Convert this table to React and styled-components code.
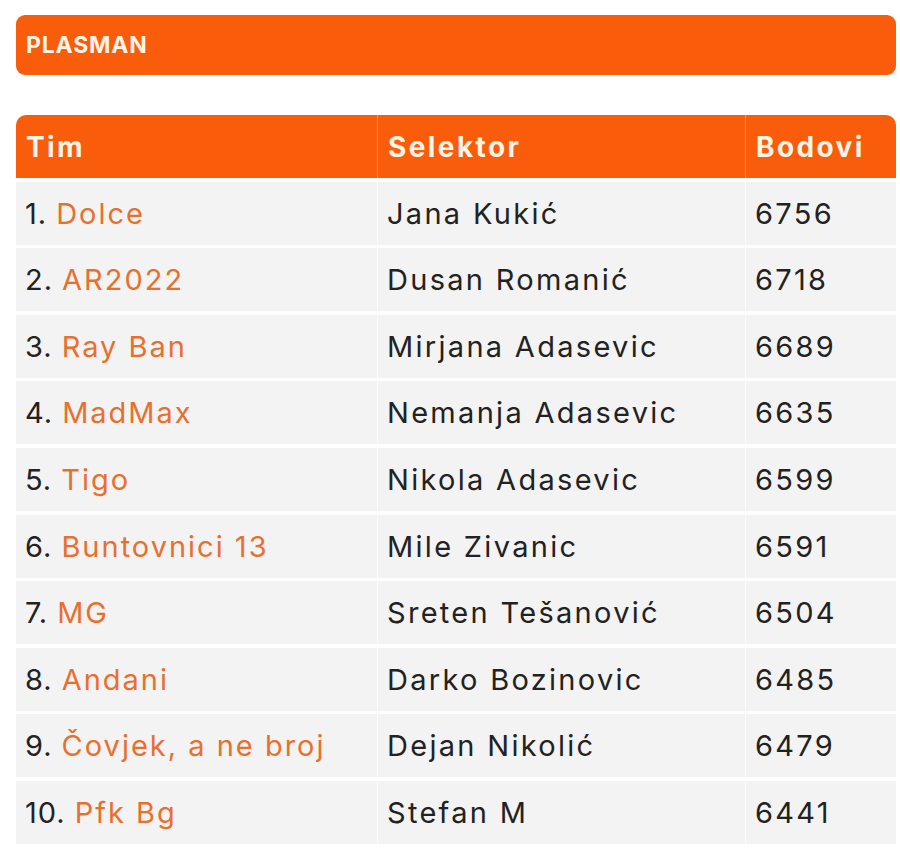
import React from 'react'
import styled, { createGlobalStyle } from 'styled-components'

const GlobalStyle = createGlobalStyle`
  body {
    margin: 0;
    background: #ffffff;
    font-family: Inter, "Noto Sans", sans-serif;
  }
`

const Page = styled.div`
  padding: 15px 4px 0 16px;
  width: 880px;
`

const Banner = styled.div`
  height: 60px;
  border-radius: 9px;
  background: #f95d0c;
  display: flex;
  align-items: center;
  padding: 0 10px;
  margin-bottom: 40px;
`

const BannerTitle = styled.h2`
  margin: 0;
  color: #fff4e6;
  font-size: 23px;
  font-weight: 700;
  letter-spacing: 0.8px;
`

const Table = styled.div`
  display: grid;
  grid-template-columns: 362px 368px 150px;
  row-gap: 3.6px;
`

const HeaderRow = styled.div`
  display: contents;
`

const HeadCell = styled.div`
  height: 63px;
  background: #f95d0c;
  color: #fff4e6;
  font-size: 28px;
  font-weight: 700;
  letter-spacing: 2.4px;
  display: flex;
  align-items: center;
  padding-left: 10px;
  border-right: ${p => (p.$last ? 'none' : '1px solid rgba(255, 220, 190, 0.45)')};
  border-top-left-radius: ${p => (p.$first ? '10px' : '0')};
  border-top-right-radius: ${p => (p.$last ? '10px' : '0')};
  box-sizing: border-box;
`

const Cell = styled.div`
  height: 63px;
  background: #f3f3f3;
  color: #222222;
  font-size: 29px;
  font-weight: 400;
  letter-spacing: 2.3px;
  display: flex;
  align-items: center;
  padding-left: 9px;
  border-right: ${p => (p.$last ? 'none' : '1px solid rgba(255, 255, 255, 0.7)')};
  box-sizing: border-box;
  white-space: nowrap;
`

const Rank = styled.span`
  letter-spacing: 1px;
`

const TeamName = styled.span`
  color: #e8702e;
  margin-left: 9px;
  letter-spacing: 2px;
`

const rows = [
  ['Dolce', 'Jana Kukić', 6756],
  ['AR2022', 'Dusan Romanić', 6718],
  ['Ray Ban', 'Mirjana Adasevic', 6689],
  ['MadMax', 'Nemanja Adasevic', 6635],
  ['Tigo', 'Nikola Adasevic', 6599],
  ['Buntovnici 13', 'Mile Zivanic', 6591],
  ['MG', 'Sreten Tešanović', 6504],
  ['Andani', 'Darko Bozinovic', 6485],
  ['Čovjek, a ne broj', 'Dejan Nikolić', 6479],
  ['Pfk Bg', 'Stefan M', 6441],
]

export default function App() {
  return (
    <Page>
      <GlobalStyle />
      <Banner>
        <BannerTitle>PLASMAN</BannerTitle>
      </Banner>
      <Table>
        <HeaderRow>
          <HeadCell $first>Tim</HeadCell>
          <HeadCell>Selektor</HeadCell>
          <HeadCell $last>Bodovi</HeadCell>
        </HeaderRow>
        {rows.map(([team, coach, pts], i) => (
          <React.Fragment key={team}>
            <Cell>
              <Rank>{i + 1}.</Rank>
              <TeamName>{team}</TeamName>
            </Cell>
            <Cell>{coach}</Cell>
            <Cell $last>{pts}</Cell>
          </React.Fragment>
        ))}
      </Table>
    </Page>
  )
}
